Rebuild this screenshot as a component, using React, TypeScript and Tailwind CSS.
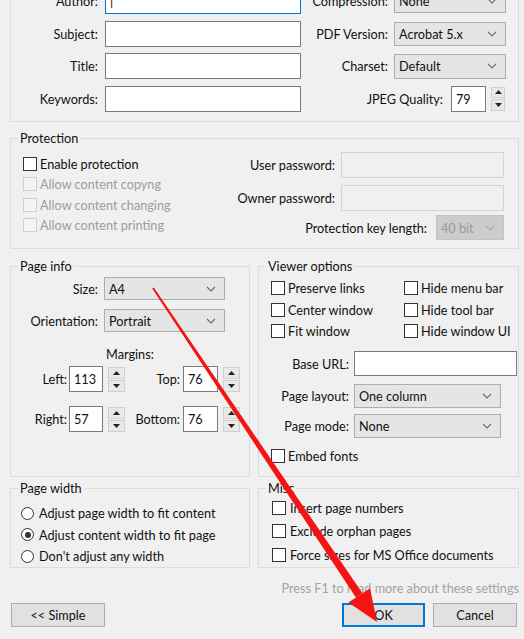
import clsx from "clsx"

function Chevron({ color = "#6b6b6b" }: { color?: string }) {
    return (
        <svg width="10" height="6" viewBox="0 0 10 6" className="shrink-0">
            <path d="M1 1l4 4 4-4" fill="none" stroke={color} strokeWidth="1.1" />
        </svg>
    )
}

function Select({ value, className, disabled }: { value: string; className?: string; disabled?: boolean }) {
    return (
        <div
            className={clsx(
                "flex items-center justify-between border pl-[4px] pr-[8px]",
                disabled ? "border-[#c4c4c4] bg-[#cccccc] text-[#9a9a9a]" : "border-[#adadad] bg-[#e5e5e5]",
                className
            )}
        >
            <span>{value}</span>
            <Chevron color={disabled ? "#a8a8a8" : "#6b6b6b"} />
        </div>
    )
}

function Field({ value, className, disabled, focused }: { value?: string; className?: string; disabled?: boolean; focused?: boolean }) {
    return (
        <div
            className={clsx(
                "flex items-center border pl-[4px]",
                disabled ? "border-[#d4d4d4] bg-[#f0f0f0]" : focused ? "border-[#0078d7] bg-white" : "border-[#7a7a7a] bg-white",
                className
            )}
        >
            {value}
        </div>
    )
}

function Spin({ className }: { className?: string }) {
    return (
        <div className={clsx("flex flex-col gap-[1px]", className)}>
            <div className="flex flex-1 items-center justify-center border border-[#cfcfcf] bg-[#e8e8e8]">
                <svg width="7" height="4" viewBox="0 0 7 4">
                    <path d="M0 4L3.5 0L7 4Z" fill="#222" />
                </svg>
            </div>
            <div className="flex flex-1 items-center justify-center border border-[#cfcfcf] bg-[#e8e8e8]">
                <svg width="7" height="4" viewBox="0 0 7 4">
                    <path d="M0 0L3.5 4L7 0Z" fill="#222" />
                </svg>
            </div>
        </div>
    )
}

function Check({ label, disabled, className }: { label: string; disabled?: boolean; className?: string }) {
    return (
        <div className={clsx("flex items-center gap-[3px]", className)}>
            <span
                className={clsx(
                    "h-[14px] w-[14px] shrink-0 border",
                    disabled ? "border-[#d0d0d0] bg-[#f4f4f4]" : "border-[#333333] bg-white"
                )}
            />
            <span className={clsx("whitespace-nowrap", disabled && "text-[#9d9d9d]")}>{label}</span>
        </div>
    )
}

function Radio({ label, checked }: { label: string; checked?: boolean }) {
    return (
        <div className="flex h-[21.5px] items-center gap-[5px]">
            <span className="flex h-[13px] w-[13px] shrink-0 items-center justify-center rounded-full border border-[#333333] bg-white">
                {checked && <span className="h-[6px] w-[6px] rounded-full bg-[#333333]" />}
            </span>
            <span className="whitespace-nowrap">{label}</span>
        </div>
    )
}

function Group({ title, className, children }: { title: string; className?: string; children: React.ReactNode }) {
    return (
        <fieldset className={clsx("min-w-0 border border-[#dcdcdc]", className)}>
            <legend className="ml-[7px] px-[2px] leading-[14px]">{title}</legend>
            {children}
        </fieldset>
    )
}

function TopRow({ label, children, right }: { label: string; children: React.ReactNode; right: React.ReactNode }) {
    return (
        <div className="flex h-[26px] items-center">
            <span className="w-[87px] text-right">{label}</span>
            <div className="ml-[7px] flex h-full w-[196px]">{children}</div>
            {right}
        </div>
    )
}

export default function App() {
    return (
        <div className="relative h-[639px] w-[524px] overflow-hidden bg-[#f0f0f0] font-[Lato,sans-serif] text-[12.7px] leading-[14px] text-[#111]">
            <div className="flex flex-col pl-[10px] pr-[5px]">
                {/* document info */}
                <div className="-mt-[24px] flex flex-col gap-[6.5px] border border-[#dcdcdc] pb-[9px] pr-[12px] pt-[11px]">
                    <TopRow
                        label="Author:"
                        right={
                            <>
                                <span className="mr-[6px] flex-1 text-right">Compression:</span>
                                <Select value="None" className="h-[24px] w-[112px]" />
                            </>
                        }
                    >
                        <Field focused className="w-full" value="|" />
                    </TopRow>
                    <TopRow
                        label="Subject:"
                        right={
                            <>
                                <span className="mr-[6px] flex-1 text-right">PDF Version:</span>
                                <Select value="Acrobat 5.x" className="h-[24px] w-[112px]" />
                            </>
                        }
                    >
                        <Field className="w-full" />
                    </TopRow>
                    <TopRow
                        label="Title:"
                        right={
                            <>
                                <span className="mr-[6px] flex-1 text-right">Charset:</span>
                                <Select value="Default" className="h-[25px] w-[112px]" />
                            </>
                        }
                    >
                        <Field className="w-full" />
                    </TopRow>
                    <TopRow
                        label="Keywords:"
                        right={
                            <>
                                <span className="mr-[8px] flex-1 text-right">JPEG Quality:</span>
                                <Field value="79" className="h-[26px] w-[35px]" />
                                <Spin className="ml-[5px] mr-[1px] h-[24px] w-[14px]" />
                            </>
                        }
                    >
                        <Field className="w-full" />
                    </TopRow>
                </div>

                {/* protection */}
                <Group title="Protection" className="mt-[9.5px]">
                    <div className="flex pb-[8px] pl-[12px] pr-[14px] pt-[7px]">
                        <div className="flex flex-col pt-[1.5px]">
                            <Check label="Enable protection" className="h-[20.5px]" />
                            <Check label="Allow content copyng" disabled className="h-[20.5px]" />
                            <Check label="Allow content changing" disabled className="h-[20.5px]" />
                            <Check label="Allow content printing" disabled className="h-[20.5px]" />
                        </div>
                        <div className="ml-auto flex flex-col items-end">
                            <div className="flex items-center">
                                <span className="mr-[6px]">User password:</span>
                                <Field disabled className="h-[26px] w-[163px]" />
                            </div>
                            <div className="mt-[7px] flex items-center">
                                <span className="mr-[6px]">Owner password:</span>
                                <Field disabled className="h-[26px] w-[163px]" />
                            </div>
                            <div className="mt-[4px] flex items-center">
                                <span className="mr-[9px]">Protection key length:</span>
                                <Select disabled value="40 bit" className="h-[25px] w-[68px]" />
                            </div>
                        </div>
                    </div>
                </Group>

                <div className="mt-[10px] flex gap-[8px]">
                    {/* page info */}
                    <Group title="Page info" className="h-[218px] w-[240px]">
                        <div className="flex flex-col pt-[4px]">
                            <div className="flex items-center">
                                <span className="w-[87px] text-right">Size:</span>
                                <Select value="A4" className="ml-[6px] h-[23px] w-[121px]" />
                            </div>
                            <div className="mt-[9px] flex items-center">
                                <span className="w-[87px] text-right">Orientation:</span>
                                <Select value="Portrait" className="ml-[6px] h-[23px] w-[121px]" />
                            </div>
                            <div className="mt-[15px] text-center">Margins:</div>
                            <div className="mt-[5px] flex items-center">
                                <span className="w-[56px] text-right">Left:</span>
                                <Field value="113" className="ml-[2px] h-[26px] w-[34px]" />
                                <Spin className="ml-[5px] h-[25px] w-[17px]" />
                                <span className="w-[55px] text-right">Top:</span>
                                <Field value="76" className="ml-[3px] h-[26px] w-[35px]" />
                                <Spin className="ml-[5px] h-[25px] w-[17px]" />
                            </div>
                            <div className="mt-[14px] flex items-center">
                                <span className="w-[56px] text-right">Right:</span>
                                <Field value="57" className="ml-[2px] h-[26px] w-[34px]" />
                                <Spin className="ml-[5px] h-[25px] w-[17px]" />
                                <span className="w-[55px] text-right">Bottom:</span>
                                <Field value="76" className="ml-[3px] h-[26px] w-[35px]" />
                                <Spin className="ml-[5px] h-[25px] w-[17px]" />
                            </div>
                        </div>
                    </Group>

                    {/* viewer options */}
                    <Group title="Viewer options" className="h-[218px] flex-1">
                        <div className="flex flex-col pl-[12px] pt-[4.5px]">
                            <div className="grid grid-cols-[133px_1fr]">
                                <Check label="Preserve links" className="h-[21.5px]" />
                                <Check label="Hide menu bar" className="h-[21.5px]" />
                                <Check label="Center window" className="h-[21.5px]" />
                                <Check label="Hide tool bar" className="h-[21.5px]" />
                                <Check label="Fit window" className="h-[21.5px]" />
                                <Check label="Hide window UI" className="h-[21.5px]" />
                            </div>
                        </div>
                        <div className="mt-[9px] flex items-center">
                            <span className="w-[90px] text-right">Base URL:</span>
                            <Field className="ml-[5px] h-[25px] w-[163px]" />
                        </div>
                        <div className="mt-[8px] flex items-center">
                            <span className="w-[90px] text-right">Page layout:</span>
                            <Select value="One column" className="ml-[5px] h-[24px] w-[147px]" />
                        </div>
                        <div className="mt-[6px] flex items-center">
                            <span className="w-[90px] text-right">Page mode:</span>
                            <Select value="None" className="ml-[5px] h-[24px] w-[147px]" />
                        </div>
                        <Check label="Embed fonts" className="ml-[12px] mt-[8px] h-[20px]" />
                    </Group>
                </div>

                <div className="mt-[4px] flex gap-[8px]">
                    <Group title="Page width" className="h-[87px] w-[240px]">
                        <div className="flex flex-col pl-[10px] pt-[7.5px]">
                            <Radio label="Adjust page width to fit content" />
                            <Radio label="Adjust content width to fit page" checked />
                            <Radio label="Don't adjust any width" />
                        </div>
                    </Group>
                    <Group title="Misc" className="h-[87px] flex-1">
                        <div className="flex flex-col pl-[13px] pt-[1px]">
                            <Check label="Insert page numbers" className="h-[23.5px] gap-[4px]" />
                            <Check label="Exclude orphan pages" className="h-[23.5px] gap-[4px]" />
                            <Check label="Force sizes for MS Office documents" className="h-[23.5px] gap-[4px]" />
                        </div>
                    </Group>
                </div>

                <div className="mt-[13px] text-right text-[#a3a3a3]">Press F1 to read more about these settings</div>

                <div className="mt-[8px] flex">
                    <button className="ml-[1px] h-[24px] w-[94px] border border-[#adadad] bg-[#e1e1e1]">&lt;&lt; Simple</button>
                    <button className="ml-auto h-[24px] w-[83px] border-2 border-[#0078d7] bg-[#e1e1e1]">OK</button>
                    <button className="ml-[8px] mr-[2px] h-[24px] w-[84px] border border-[#adadad] bg-[#e1e1e1]">Cancel</button>
                </div>
            </div>

            {/* red annotation arrow */}
            <svg className="pointer-events-none absolute left-0 top-0" width="524" height="639" viewBox="0 0 524 639">
                <polygon points="152.2,288.6 153.8,287.4 362.5,593.2 355.9,597.6" fill="#f41414" />
                <polygon points="348.4,602.6 370,588.2 377,622" fill="#f41414" />
            </svg>
        </div>
    )
}
